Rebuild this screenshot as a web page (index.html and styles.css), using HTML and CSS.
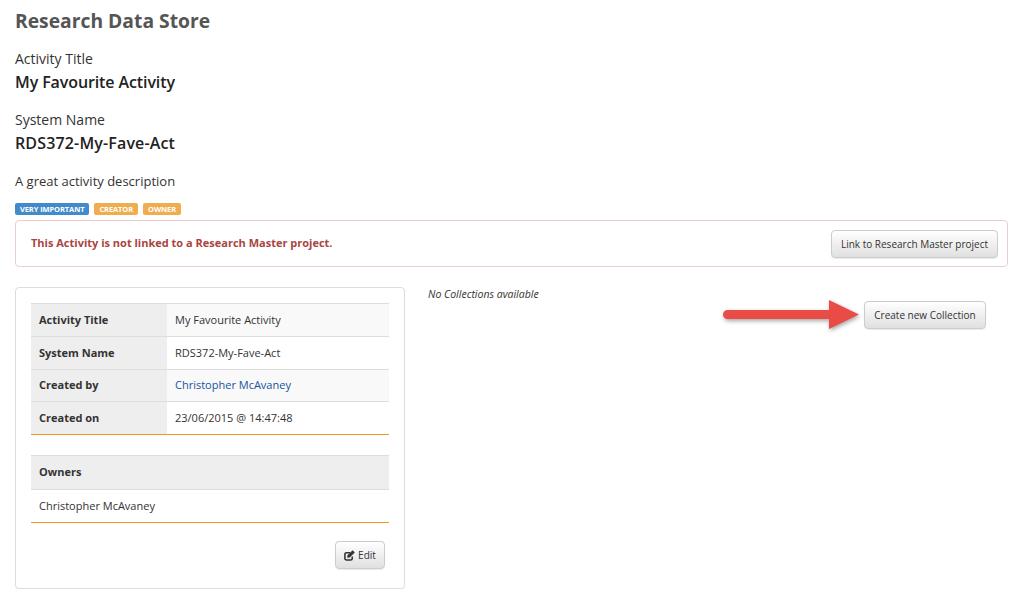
FILE: index.html
```html
<!DOCTYPE html>
<html lang="en">
<head>
<meta charset="utf-8">
<title>Research Data Store</title>
<link rel="stylesheet" href="styles.css">
</head>
<body>
<h1 class="page-title">Research Data Store</h1>
<div class="field">
  <div class="field-label">Activity Title</div>
  <div class="field-value value-title">My Favourite Activity</div>
</div>
<div class="field">
  <div class="field-label">System Name</div>
  <div class="field-value value-system">RDS372-My-Fave-Act</div>
</div>
<p class="description">A great activity description</p>
<div class="badges">
  <span class="badge badge-blue">VERY IMPORTANT</span>
  <span class="badge badge-orange">CREATOR</span>
  <span class="badge badge-orange">OWNER</span>
</div>
<div class="alert">
  <strong class="alert-text">This Activity is not linked to a Research Master project.</strong>
  <button class="btn btn-link-rm">Link to Research Master project</button>
</div>
<div class="columns">
  <section class="panel">
    <table class="info">
      <tr class="odd"><th>Activity Title</th><td>My Favourite Activity</td></tr>
      <tr><th>System Name</th><td>RDS372-My-Fave-Act</td></tr>
      <tr class="odd"><th>Created by</th><td><a href="#">Christopher McAvaney</a></td></tr>
      <tr><th>Created on</th><td>23/06/2015 @ 14:47:48</td></tr>
    </table>
    <table class="info owners">
      <tr><th>Owners</th></tr>
      <tr><td>Christopher McAvaney</td></tr>
    </table>
    <div class="panel-actions">
      <button class="btn btn-edit">
        <svg class="edit-icon" viewBox="0 0 12 12" width="11" height="11" aria-hidden="true">
          <path d="M9 7V9.2A1.7 1.7 0 0 1 7.3 10.9H2.7A1.7 1.7 0 0 1 1 9.2V4.6A1.7 1.7 0 0 1 2.7 2.9H6.6" fill="none" stroke="#333" stroke-width="1.7"/>
          <path d="M3.8 5.8 3.5 8.5 6.2 8.2 11.8 2.6 9.4.2Z" fill="#333"/>
        </svg>Edit
      </button>
    </div>
  </section>
  <section class="collections">
    <em class="empty-note">No Collections available</em>
    <div class="collection-actions">
      <button class="btn btn-create">Create new Collection</button>
    </div>
    <svg class="arrow" viewBox="0 0 146 40" width="146" height="40" aria-hidden="true">
      <path class="arrow-shape" d="M7.5 15H109V5L139 19.5 109 34V24H7.5a4.5 4.5 0 0 1 0-9Z"/>
    </svg>
  </section>
</div>
</body>
</html>
```
FILE: styles.css
```css
* { box-sizing: border-box; }
html, body { margin: 0; padding: 0; }
body {
  padding: 9px 13px 0 15px;
  background: #fff;
  color: #333;
  font-family: "Open Sans", "Noto Sans", sans-serif;
  font-size: 11px;
  line-height: 16px;
  overflow: hidden;
}
.page-title {
  margin: 0 0 16px;
  font-size: 19.3px;
  line-height: 24px;
  font-weight: 700;
  color: #555;
}
.field { margin-bottom: 16px; }
.field-label {
  font-size: 14px;
  line-height: 20px;
  color: #333;
}
.field-value {
  margin-top: 2px;
  font-size: 16px;
  line-height: 23px;
  font-weight: 600;
  color: #222;
}
.value-title { letter-spacing: -.1px; }
.value-system { letter-spacing: .15px; }
.description {
  margin: 0 0 12px;
  font-size: 13px;
  line-height: 20px;
  color: #333;
}
.badges { display: flex; gap: 5px; height: 12px; margin-bottom: 5px; }
.badge {
  display: block;
  height: 12px;
  padding: 0 5px;
  border-radius: 2px;
  color: #fff;
  font-size: 7.5px;
  letter-spacing: -.1px;
  line-height: 12px;
  font-weight: 700;
}
.badge-blue { background: #428bca; }
.badge-orange { background: #f0ad4e; }
.alert {
  display: flex;
  align-items: center;
  justify-content: space-between;
  height: 47px;
  padding: 0 9px 0 15px;
  border: 1px solid #ebccd1;
  border-radius: 4px;
}
.alert-text { margin-bottom: 1px; font-size: 11px; font-weight: 700; color: #a94442; }
.btn {
  display: inline-flex;
  align-items: center;
  justify-content: center;
  height: 28px;
  padding: 0;
  border: 1px solid #ccc;
  border-radius: 4px;
  background: linear-gradient(#fff, #e0e0e0);
  box-shadow: 0 1px 1px rgba(0,0,0,.08);
  color: #333;
  font: 400 10px/14px "Open Sans", "Noto Sans", sans-serif;
}
.btn-link-rm { width: 167px; }
.btn-create { width: 122px; }
.btn-edit { width: 50px; gap: 3px; }
.columns { display: flex; margin-top: 20px; }
.panel {
  flex: 0 0 390px;
  height: 302px;
  padding: 15px;
  border: 1px solid #ddd;
  border-radius: 4px;
  box-shadow: 0 1px 1px rgba(0,0,0,.05);
}
.info {
  width: 358px;
  border-collapse: collapse;
  border-bottom: 1px solid #f7931e;
  font-size: 11px;
  color: #333;
}
.info th, .info td {
  padding: 0 8px;
  text-align: left;
  border-top: 1px solid #ddd;
  height: 32.75px;
}
.info tr:last-child th, .info tr:last-child td { height: 33px; }
.info th { width: 136px; background: #eee; font-weight: 700; }
.info .odd td { background: #f9f9f9; }
.info a { color: #15539e; text-decoration: none; }
.owners { margin-top: 20px; }
.owners th { width: auto; height: 34px; padding-bottom: 2px; }
.owners td { height: 33px; }
.panel-actions { display: flex; justify-content: flex-end; margin-top: 18px; padding-right: 4px; }
.collections { position: relative; flex: 1; padding-left: 23px; }
.empty-note { display: block; margin-top: -1px; font-size: 10.5px; line-height: 16px; color: #333; }
.collection-actions { display: flex; justify-content: flex-end; margin-top: -1px; padding-right: 22px; }
.arrow { position: absolute; left: 315px; top: 8px; overflow: visible; }
.arrow-shape { fill: #e94c46; filter: drop-shadow(1px 2px 2px rgba(0,0,0,.35)); }
```
